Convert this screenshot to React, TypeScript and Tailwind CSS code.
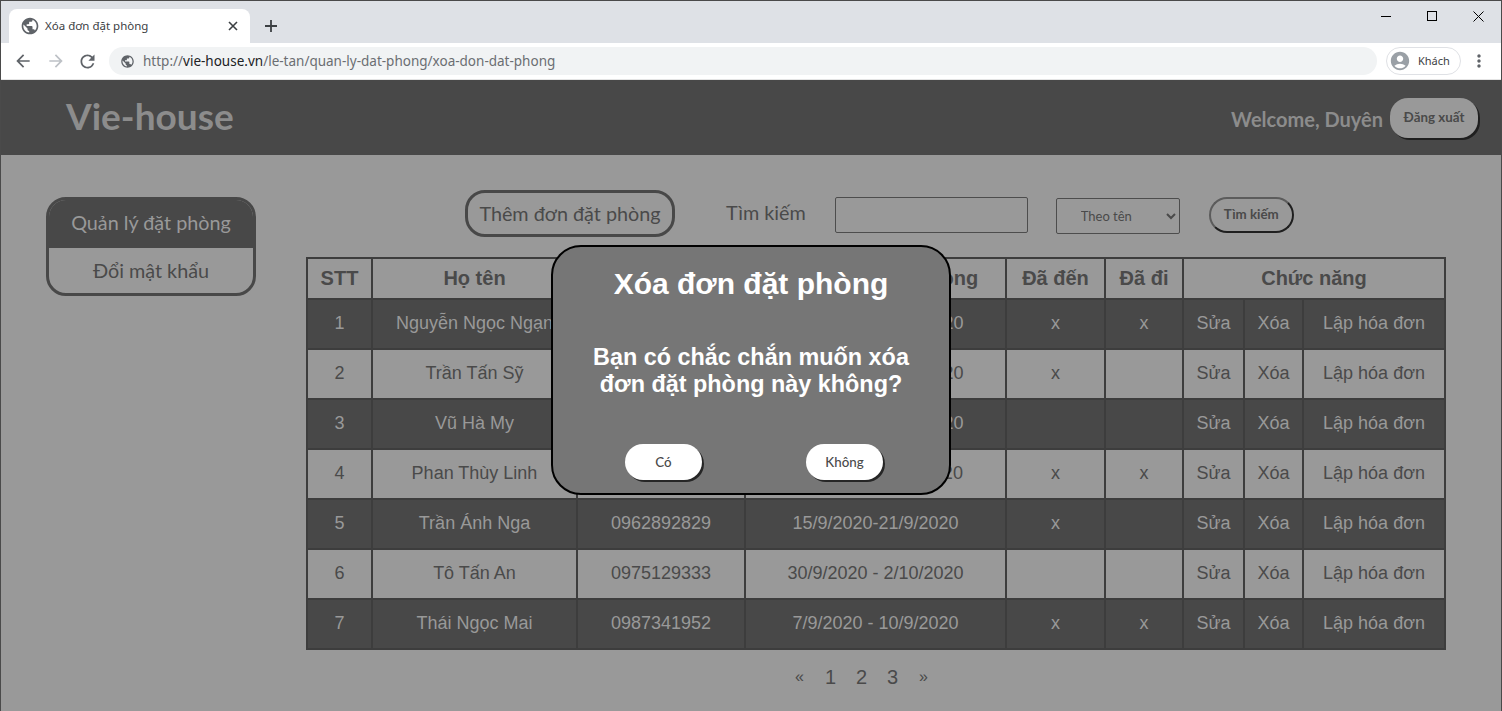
import { MdAccountCircle, MdArrowBack, MdArrowForward, MdMoreVert, MdPublic, MdRefresh } from "react-icons/md";

const bookings = [
  { name: "Nguyễn Ngọc Ngạn", phone: "0912345678", date: "10/9/2020 - 15/9/2020", came: true, left: true },
  { name: "Trần Tấn Sỹ", phone: "0934567812", date: "13/9/2020 - 18/9/2020", came: true, left: false },
  { name: "Vũ Hà My", phone: "0978123456", date: "20/9/2020 - 22/9/2020", came: false, left: false },
  { name: "Phan Thùy Linh", phone: "0905671234", date: "11/9/2020 - 19/9/2020", came: true, left: true },
  { name: "Trần Ánh Nga", phone: "0962892829", date: "15/9/2020-21/9/2020", came: true, left: false },
  { name: "Tô Tấn An", phone: "0975129333", date: "30/9/2020 - 2/10/2020", came: false, left: false },
  { name: "Thái Ngọc Mai", phone: "0987341952", date: "7/9/2020 - 10/9/2020", came: true, left: true },
];

function BrowserChrome() {
  return (
    <div className="h-[80px] bg-white font-['Noto_Sans',sans-serif]">
      <div className="h-[43px] bg-[#dee1e6] border-t border-[#4a4a4a] flex items-end pl-2 relative">
        <div className="w-[241px] h-[34px] bg-white rounded-t-lg flex items-center pl-[10px] pr-[10px] text-[#3c4043]">
          <MdPublic size={20} className="text-[#5f6368] ml-[1px]" />
          <span className="ml-[5px] text-[11.5px] flex-1">Xóa đơn đặt phòng</span>
          <svg width="10" height="10" viewBox="0 0 10 10" className="mr-[2px]">
            <path d="M1 1l8 8M9 1l-8 8" stroke="#3c4043" strokeWidth="1.6" />
          </svg>
        </div>
        <svg width="14" height="14" viewBox="0 0 14 14" className="ml-[14px] mb-[10px]">
          <path d="M7 1v12M1 7h12" stroke="#3c4043" strokeWidth="1.8" />
        </svg>
        <div className="absolute right-0 top-0 flex items-center text-black">
          <div className="w-[46px] h-[30px] flex items-center justify-center">
            <div className="w-[10px] h-px bg-black" />
          </div>
          <div className="w-[46px] h-[30px] flex items-center justify-center">
            <div className="w-[10px] h-[10px] border border-black" />
          </div>
          <div className="w-[46px] h-[30px] flex items-center justify-center">
            <svg width="11" height="11" viewBox="0 0 11 11">
              <path d="M.5.5l10 10M10.5.5l-10 10" stroke="#000" strokeWidth="1" />
            </svg>
          </div>
        </div>
      </div>
      <div className="h-[37px] border-b border-[#e4e4e4] flex items-center pl-[12px]">
        <MdArrowBack size={20} className="text-[#5f6368]" />
        <MdArrowForward size={20} className="text-[#bdc1c6] ml-[13px]" />
        <MdRefresh size={21} className="text-[#5f6368] ml-[11px]" />
        <div className="ml-[11px] w-[1268px] h-[28px] bg-[#f1f3f4] rounded-full flex items-center pl-[11px]">
          <MdPublic size={15} className="text-[#5f6368]" />
          <span className="ml-[8px] text-[13.5px] text-[#6b6e72]">
            http://<span className="text-[#202124]">vie-house.vn</span>/le-tan/quan-ly-dat-phong/xoa-don-dat-phong
          </span>
        </div>
        <div className="ml-[9px] w-[75px] h-[28px] border border-[#dfe1e5] rounded-full flex items-center pl-[2px]">
          <MdAccountCircle size={22} className="text-[#9aa0a6]" />
          <span className="ml-[7px] text-[11px] text-[#3c4043]">Khách</span>
        </div>
        <MdMoreVert size={20} className="text-[#5f6368] ml-[8px]" />
      </div>
    </div>
  );
}

function PageHeader() {
  return (
    <header className="h-[75px] bg-[#484848] flex items-center justify-between pl-[65px] pr-[23px] font-['Lato',sans-serif]">
      <h1 className="text-[37px] font-bold text-[#8c8c8c] leading-none -mt-[4px]">Vie-house</h1>
      <div className="flex items-center">
        <span className="text-[20px] font-bold text-[#8c8c8c] mt-[2px]">Welcome, Duyên</span>
        <button className="ml-[7px] mt-[1px] w-[88px] h-[40px] bg-[#999] rounded-[18px] shadow-[2px_2px_0_#1f1f1f] text-[13.33px] font-bold text-[#4a4a4a]">
          Đăng xuất
        </button>
      </div>
    </header>
  );
}

function Sidebar() {
  return (
    <aside className="w-[210px] h-[99px] mt-[42px] ml-[45px] shrink-0 rounded-[20px] border-[3px] border-[#484848] overflow-hidden font-['Lato',sans-serif] text-[19.8px] text-center">
      <div className="h-[48px] bg-[#484848] text-[#999] leading-[44px]">Quản lý đặt phòng</div>
      <div className="text-[#4a4a4a] leading-[44px]">Đổi mật khẩu</div>
    </aside>
  );
}

function Toolbar() {
  return (
    <div className="h-[47px] flex items-center ml-[159px] font-['Lato',sans-serif] text-[#4a4a4a]">
      <button className="w-[210px] h-[47px] rounded-[20px] border-[3px] border-[#484848] text-[19.8px]">Thêm đơn đặt phòng</button>
      <span className="ml-[51px] text-[19.8px] -mt-[2px]">Tìm kiếm</span>
      <input className="ml-[29px] mt-[2px] w-[193px] h-[36px] border border-[#4d4d4d] rounded-[2px]" readOnly />
      <select className="ml-[28px] mt-[4px] w-[124px] h-[36px] border border-[#4d4d4d] rounded-[2px] text-[13px] pl-[20px]">
        <option>Theo tên</option>
      </select>
      <button className="ml-[29px] mt-[2px] w-[85px] h-[36px] rounded-[18px] border-2 border-l-[#5c5c5c] border-t-[#5c5c5c] border-r-[#1f1f1f] border-b-[#1f1f1f] text-[13.33px] font-bold">
        Tìm kiếm
      </button>
    </div>
  );
}

function BookingTable() {
  const th = "border-2 border-[#3d3d3d] font-bold text-[20px] pb-[2px]";
  const td = "border-2 border-[#3d3d3d] font-normal pb-[2px]";
  return (
    <table className="mt-[20px] w-[1139px] table-fixed border-collapse font-['Liberation_Sans',sans-serif] text-[18px] text-center">
      <colgroup>
        <col className="w-[65px]" />
        <col className="w-[205px]" />
        <col className="w-[168px]" />
        <col className="w-[261px]" />
        <col className="w-[99px]" />
        <col className="w-[78px]" />
        <col className="w-[61px]" />
        <col className="w-[59px]" />
        <col className="w-[142px]" />
      </colgroup>
      <thead>
        <tr className="h-[41px] text-[#4a4a4a]">
          <th className={th}>STT</th>
          <th className={th}>Họ tên</th>
          <th className={th}>Số điện thoại</th>
          <th className={th}>Thời gian thuê phòng</th>
          <th className={th}>Đã đến</th>
          <th className={th}>Đã đi</th>
          <th className={th} colSpan={3}>
            Chức năng
          </th>
        </tr>
      </thead>
      <tbody>
        {bookings.map((b, i) => (
          <tr key={i} className={`h-[50px] ${i % 2 === 0 ? "bg-[#484848] text-[#999]" : "text-[#4a4a4a]"}`}>
            <td className={td}>{i + 1}</td>
            <td className={td}>{b.name}</td>
            <td className={td}>{b.phone}</td>
            <td className={td}>{b.date}</td>
            <td className={td}>{b.came ? "x" : ""}</td>
            <td className={td}>{b.left ? "x" : ""}</td>
            <td className={td}>Sửa</td>
            <td className={td}>Xóa</td>
            <td className={td}>Lập hóa đơn</td>
          </tr>
        ))}
      </tbody>
    </table>
  );
}

function Pagination() {
  return (
    <div className="mt-[14px] ml-[489px] flex items-center font-['Liberation_Sans',sans-serif] text-[#4a4a4a] text-[20px] leading-[26px]">
      <span className="text-[16px] w-[20px]">«</span>
      <span className="w-[31px] text-center">1</span>
      <span className="w-[31px] text-center">2</span>
      <span className="w-[31px] text-center">3</span>
      <span className="text-[16px] ml-[11px]">»</span>
    </div>
  );
}

function DeleteModal() {
  const btn =
    "w-[77px] h-[36px] pt-[2px] bg-white rounded-[18px] shadow-[2px_2px_0_#262626] font-['Lato',sans-serif] font-medium text-[13.33px] text-[#4a4a4a]";
  return (
    <div className="absolute left-[550px] top-[245px] w-[400px] h-[250px] bg-[#767676] rounded-[30px] border-2 border-black text-white text-center font-['Liberation_Sans',sans-serif] font-bold">
      <h2 className="text-[30px] leading-[36px] mt-[19px]">Xóa đơn đặt phòng</h2>
      <p className="text-[23.4px] leading-[27px] mt-[42px]">
        Bạn có chắc chắn muốn xóa
        <br />
        đơn đặt phòng này không?
      </p>
      <div className="flex mt-[46px] pl-[72px] gap-[104px]">
        <button className={btn}>Có</button>
        <button className={btn}>Không</button>
      </div>
    </div>
  );
}

export default function App() {
  return (
    <div className="relative w-[1502px] h-[711px] overflow-hidden bg-[#999] border-x border-[#4a4a4a]">
      <BrowserChrome />
      <PageHeader />
      <div className="flex">
        <Sidebar />
        <main className="ml-[50px] pt-[35px]">
          <Toolbar />
          <BookingTable />
          <Pagination />
        </main>
      </div>
      <DeleteModal />
    </div>
  );
}
